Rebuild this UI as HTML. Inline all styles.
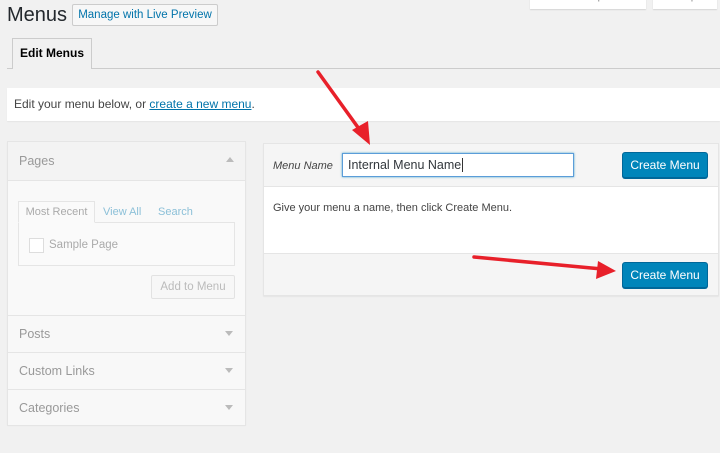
<!DOCTYPE html>
<html><head><style>
body{margin:0;width:720px;height:453px;background:#f1f1f1;font-family:"Liberation Sans",sans-serif;position:relative;overflow:hidden;color:#23282d}
.a{position:absolute}
.btn{position:absolute;background:#0085ba;border:1px solid #006799;border-radius:3px;color:#fff;font-size:12px;text-align:center;box-shadow:0 1px 0 #006799;box-sizing:border-box}
.row{position:absolute;left:7px;width:239px;height:37px;border:1px solid #e5e5e5;border-bottom:none;box-sizing:border-box;font-size:12.5px;color:#999;background:#f8f8f8}
.row span{position:absolute;left:11px;top:11px}
.row i{position:absolute;right:12px;top:15px;width:0;height:0;border-left:4px solid transparent;border-right:4px solid transparent;border-top:5px solid #bbb}
</style></head><body>
<div class="a" style="left:530px;top:-12px;width:116px;height:21px;background:#fff;box-shadow:0 1px 1px rgba(0,0,0,.12);font-size:12px;color:#999;text-align:center;line-height:14px;overflow:hidden">Screen Options</div>
<div class="a" style="left:653px;top:-12px;width:64px;height:21px;background:#fff;box-shadow:0 1px 1px rgba(0,0,0,.12);font-size:12px;color:#999;text-align:center;line-height:14px;overflow:hidden">Help</div>
<div class="a" style="left:7px;top:4px;font-size:20px;color:#23282d">Menus</div>
<div class="a" style="left:72px;top:4px;width:146px;height:22px;border:1px solid #ccc;background:#f7f7f7;border-radius:2px;box-sizing:border-box;font-size:11.5px;color:#0073aa;text-align:center;line-height:20px">Manage with Live Preview</div>
<div class="a" style="left:7px;top:68px;width:713px;height:1px;background:#ccc"></div>
<div class="a" style="left:12px;top:38px;width:80px;height:31px;border:1px solid #ccc;border-bottom:none;background:#f1f1f1;box-sizing:border-box;font-size:12px;font-weight:bold;text-align:center;line-height:29px;color:#000">Edit Menus</div>
<div class="a" style="left:7px;top:88px;width:713px;height:33px;background:#fff;box-shadow:0 1px 1px rgba(0,0,0,.05);font-size:12px;color:#444;line-height:33px;padding-left:7px;box-sizing:border-box">Edit your menu below, or <span style="color:#0073aa;text-decoration:underline">create a new menu</span>.</div>
<div class="a" style="left:7px;top:141px;width:239px;height:284px;background:#f9f9f9;border:1px solid #e5e5e5;box-sizing:border-box;box-shadow:0 1px 1px rgba(0,0,0,.05)"></div>
<div class="a" style="left:8px;top:142px;width:237px;height:38px;background:#f3f3f3;border-bottom:1px solid #e5e5e5"></div>
<div class="a" style="left:19px;top:154px;font-size:12.5px;color:#999">Pages</div>
<div class="a" style="left:226px;top:157px;width:0;height:0;border-left:4px solid transparent;border-right:4px solid transparent;border-bottom:5px solid #bbb"></div>
<div class="a" style="left:18px;top:222px;width:217px;height:44px;border:1px solid #e5e5e5;box-sizing:border-box;background:#fafafa"></div>
<div class="a" style="left:18px;top:201px;width:77px;height:22px;border:1px solid #e5e5e5;border-bottom:1px solid #fafafa;box-sizing:border-box;background:#fafafa;font-size:11px;color:#aaa;text-align:center;line-height:20px">Most Recent</div>
<div class="a" style="left:103px;top:206px;font-size:11px;color:#8cc0d8">View All</div>
<div class="a" style="left:158px;top:206px;font-size:11px;color:#8cc0d8">Search</div>
<div class="a" style="left:29px;top:238px;width:13px;height:13px;border:1px solid #ddd;background:#fff"></div>
<div class="a" style="left:49px;top:239px;font-size:11.5px;color:#aaa">Sample Page</div>
<div class="a" style="left:151px;top:275px;width:84px;height:24px;border:1px solid #e2e2e2;border-radius:2px;background:#f7f7f7;box-sizing:border-box;font-size:11.5px;color:#bbb;text-align:center;line-height:22px">Add to Menu</div>
<div class="row" style="top:315px"><span>Posts</span><i></i></div>
<div class="row" style="top:352px"><span>Custom Links</span><i></i></div>
<div class="row" style="top:389px;height:37px;border-bottom:1px solid #e5e5e5"><span>Categories</span><i></i></div>
<div class="a" style="left:263px;top:143px;width:456px;height:153px;border:1px solid #e5e5e5;box-sizing:border-box;background:#f5f5f5;box-shadow:0 1px 1px rgba(0,0,0,.05)"></div>
<div class="a" style="left:264px;top:186px;width:454px;height:66px;background:#fff;border-top:1px solid #e5e5e5;border-bottom:1px solid #e5e5e5"></div>
<div class="a" style="left:273px;top:160px;font-size:11px;font-style:italic;color:#444">Menu Name</div>
<div class="a" style="left:342px;top:153px;width:232px;height:24px;border:1px solid #5b9dd9;box-shadow:0 0 2px rgba(30,140,190,.8);background:#fff;box-sizing:border-box;font-size:12.5px;color:#32373c;line-height:22px;padding-left:5px">Internal Menu Name<span style="border-left:1px solid #333;margin-left:1px"></span></div>
<div class="btn" style="left:622px;top:152px;width:86px;height:26px;line-height:24px">Create Menu</div>
<div class="a" style="left:273px;top:202px;font-size:11px;color:#444">Give your menu a name, then click Create Menu.</div>
<div class="btn" style="left:622px;top:262px;width:86px;height:26px;line-height:24px">Create Menu</div>
<svg class="a" style="left:0;top:0" width="720" height="453">
<line x1="318" y1="72" x2="362" y2="133" stroke="#e8202a" stroke-width="3.5" stroke-linecap="round"/>
<polygon points="370,145 352,130 368,121" fill="#e8202a"/>
<line x1="474" y1="257" x2="602" y2="269" stroke="#e8202a" stroke-width="3.5" stroke-linecap="round"/>
<polygon points="616,271 598,261 596,279" fill="#e8202a"/>
</svg>
</body></html>
